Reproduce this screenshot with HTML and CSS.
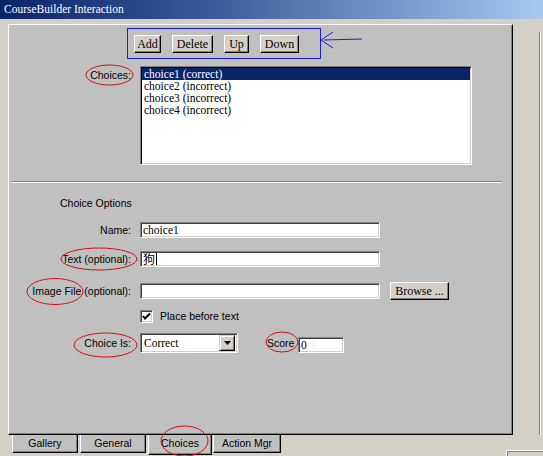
FILE: index.html
```html
<!DOCTYPE html>
<html>
<head>
<meta charset="utf-8">
<title>CourseBuilder Interaction</title>
<link rel="stylesheet" href="styles.css">
</head>
<body>
<div class="titlebar">CourseBuilder Interaction</div>
<div class="workspace">
  <div class="panel">
    <div class="btnbox">
      <div class="btn w-add">Add</div>
      <div class="btn w-delete">Delete</div>
      <div class="btn w-up">Up</div>
      <div class="btn w-down">Down</div>
    </div>
    <div class="row row-choices">
      <span class="label label-top">Choices:</span>
      <div class="listbox">
        <div class="item sel">choice1 (correct)</div>
        <div class="item">choice2 (incorrect)</div>
        <div class="item">choice3 (incorrect)</div>
        <div class="item">choice4 (incorrect)</div>
      </div>
    </div>
    <div class="sep"></div>
    <div class="heading">Choice Options</div>
    <div class="row row-name">
      <span class="label">Name:</span>
      <div class="field w-wide">choice1</div>
    </div>
    <div class="row row-text">
      <span class="label">Text (optional):</span>
      <div class="field w-wide"><span class="cjk">狗</span><span class="caret"></span></div>
    </div>
    <div class="row row-image">
      <span class="label">Image File (optional):</span>
      <div class="ctrls">
        <div class="field w-wide"></div>
        <div class="btn browse">Browse ...</div>
      </div>
    </div>
    <div class="row row-check">
      <span class="label"></span>
      <div class="ctrls">
        <div class="checkbox"><svg width="9" height="9" viewBox="0 0 9 9"><polyline points="1,4 3,6.5 8,1.5" fill="none" stroke="#000" stroke-width="2"/></svg></div>
        <span class="checklabel">Place before text</span>
      </div>
    </div>
    <div class="row row-choice">
      <span class="label">Choice Is:</span>
      <div class="ctrls">
        <div class="select">
          <span class="select-text">Correct</span>
          <span class="select-btn"><svg width="7" height="4" viewBox="0 0 7 4"><polygon points="0,0 7,0 3.5,4" fill="#000"/></svg></span>
        </div>
        <span class="score-label">Score</span>
        <div class="field w-score">0</div>
      </div>
    </div>
  </div>
  <div class="edge"></div>
</div>
<div class="tabs">
  <div class="tab w-gallery">Gallery</div>
  <div class="tab w-general">General</div>
  <div class="tab tab-sel w-choices">Choices</div>
  <div class="tab w-action">Action Mgr</div>
  <div class="corner"></div>
</div>
<svg class="annot" width="543" height="456" viewBox="0 0 543 456">
  <g fill="none" stroke="#d41010" stroke-width="1">
    <ellipse cx="109.5" cy="75" rx="23.5" ry="10"/>
    <ellipse cx="99" cy="259" rx="38" ry="11"/>
    <ellipse cx="55" cy="291.5" rx="28" ry="13"/>
    <ellipse cx="105.5" cy="345" rx="31.5" ry="12"/>
    <ellipse cx="282" cy="342" rx="16" ry="10"/>
    <ellipse cx="184.5" cy="441" rx="23.5" ry="15"/>
  </g>
  <g fill="none" stroke="#1a1ad0" stroke-width="1">
    <line x1="321" y1="40" x2="333" y2="32"/>
    <line x1="321" y1="40" x2="333" y2="48"/>
    <line x1="324" y1="40" x2="362" y2="39"/>
  </g>
</svg>
</body>
</html>
```
FILE: styles.css
```css
html, body {
  margin: 0;
  padding: 0;
}
body {
  width: 543px;
  height: 456px;
  overflow: hidden;
  background: #d4d0c8;
  font-family: "Liberation Sans", Arial, sans-serif;
  font-size: 10.5px;
  color: #000;
  position: relative;
}
.titlebar {
  height: 19px;
  line-height: 19px;
  padding-left: 4px;
  background: linear-gradient(to right, #0a246a 0%, #3a5c9c 40%, #a6caf0 100%);
  color: #fff;
  font-family: "Liberation Serif", "Times New Roman", serif;
  font-size: 11.5px;
}
.workspace {
  display: flex;
  padding-top: 5px;
  padding-left: 8px;
}
.panel {
  width: 505px;
  height: 411px;
  box-sizing: border-box;
  background: #c0c0c0;
  border-top: 1px solid #fff;
  border-left: 1px solid #fff;
  border-right: 1px solid #000;
  border-bottom: 1px solid #000;
  box-shadow: inset -1px -1px 0 #808080;
  display: flex;
  flex-direction: column;
}
.edge {
  width: 0;
  margin-left: 26px;
  margin-top: 8px;
  border-left: 1px solid #808080;
  border-right: 1px solid #fff;
}
.btnbox {
  margin-top: 3px;
  margin-left: 118px;
  width: 194px;
  height: 31px;
  box-sizing: border-box;
  border: 1px solid #1a1ad0;
  display: flex;
  align-items: center;
  padding-left: 6px;
  gap: 11px;
}
.btn {
  height: 18px;
  box-sizing: border-box;
  background: #d4d0c8;
  border-top: 1px solid #fff;
  border-left: 1px solid #fff;
  border-right: 1px solid #000;
  border-bottom: 1px solid #000;
  box-shadow: inset -1px -1px 0 #808080;
  font-family: "Liberation Serif", "Times New Roman", serif;
  font-size: 12px;
  line-height: 16px;
  text-align: center;
}
.w-add { width: 27px; }
.w-delete { width: 41px; }
.w-up { width: 25px; }
.w-down { width: 39px; }
.row {
  display: grid;
  grid-template-columns: 122px auto;
  column-gap: 9px;
  align-items: center;
}
.label {
  text-align: right;
  line-height: 12px;
  white-space: nowrap;
}
.label-top {
  align-self: start;
  padding-top: 3px;
}
.row-choices {
  margin-top: 7px;
  height: 99px;
  align-items: start;
}
.listbox {
  width: 332px;
  height: 99px;
  box-sizing: border-box;
  background: #fff;
  border-top: 1px solid #808080;
  border-left: 1px solid #808080;
  border-right: 1px solid #fff;
  border-bottom: 1px solid #fff;
  box-shadow: inset 1px 1px 0 #000, inset -1px -1px 0 #d4d0c8;
  padding: 1px;
  font-family: "Liberation Serif", "Times New Roman", serif;
  font-size: 11.5px;
}
.item {
  height: 12px;
  line-height: 12px;
  padding-left: 2px;
  white-space: nowrap;
}
.item.sel {
  background: #0a246a;
  color: #fff;
}
.sep {
  margin-top: 16px;
  margin-left: 3px;
  margin-right: 10px;
  border-top: 1px solid #808080;
  border-bottom: 1px solid #fff;
}
.heading {
  margin-top: 14px;
  padding-left: 51px;
  height: 12px;
  line-height: 12px;
}
.field {
  height: 16px;
  box-sizing: border-box;
  background: #fff;
  border-top: 1px solid #808080;
  border-left: 1px solid #808080;
  border-right: 1px solid #fff;
  border-bottom: 1px solid #fff;
  box-shadow: inset 1px 1px 0 #404040, inset -1px -1px 0 #d4d0c8;
  padding-left: 2px;
  font-family: "Liberation Serif", "Times New Roman", serif;
  font-size: 11.5px;
  line-height: 14px;
  display: flex;
  align-items: center;
  white-space: nowrap;
}
.w-wide { width: 240px; }
.w-score { width: 46px; align-self: flex-end; }
.cjk {
  font-family: "Noto Sans CJK TC", "Noto Sans CJK SC", sans-serif;
  font-size: 12px;
  line-height: 14px;
}
.caret {
  width: 1px;
  height: 12px;
  background: #000;
  margin-left: 1px;
}
.row-name { margin-top: 13px; height: 16px; }
.row-text { margin-top: 13px; height: 16px; }
.row-image { margin-top: 15px; height: 18px; }
.row-check { margin-top: 9px; height: 14px; }
.row-choice { margin-top: 10px; height: 20px; }
.ctrls {
  display: flex;
  align-items: center;
  height: 100%;
}
.browse {
  width: 59px;
  margin-left: 10px;
}
.checkbox {
  width: 13px;
  height: 13px;
  box-sizing: border-box;
  background: #fff;
  border-top: 1px solid #808080;
  border-left: 1px solid #808080;
  border-right: 1px solid #fff;
  border-bottom: 1px solid #fff;
  box-shadow: inset 1px 1px 0 #404040, inset -1px -1px 0 #d4d0c8;
  display: flex;
  align-items: center;
  justify-content: center;
}
.checklabel {
  margin-left: 7px;
}
.select {
  width: 98px;
  height: 20px;
  box-sizing: border-box;
  background: #fff;
  border-top: 1px solid #808080;
  border-left: 1px solid #808080;
  border-right: 1px solid #fff;
  border-bottom: 1px solid #fff;
  box-shadow: inset 1px 1px 0 #404040, inset -1px -1px 0 #d4d0c8;
  display: flex;
  align-items: center;
  padding: 2px 2px 2px 3px;
  font-family: "Liberation Serif", "Times New Roman", serif;
  font-size: 11.5px;
}
.select-text { flex: 1; }
.select-btn {
  width: 16px;
  height: 16px;
  box-sizing: border-box;
  background: #d4d0c8;
  border-top: 1px solid #d4d0c8;
  border-left: 1px solid #d4d0c8;
  border-right: 1px solid #000;
  border-bottom: 1px solid #000;
  box-shadow: inset 1px 1px 0 #fff, inset -1px -1px 0 #808080;
  display: flex;
  align-items: center;
  justify-content: center;
}
.score-label {
  margin-left: 29px;
  width: 31px;
}
.tabs {
  display: flex;
  padding-left: 12px;
  height: 21px;
}
.tab {
  height: 18px;
  box-sizing: border-box;
  background: #c0c0c0;
  border-left: 1px solid #fff;
  border-right: 1px solid #000;
  border-bottom: 1px solid #000;
  box-shadow: inset -1px -1px 0 #808080;
  text-align: center;
  line-height: 16px;
  margin-right: 2px;
}
.tab-sel {
  height: 20px;
  margin-right: 1px;
}
.w-gallery { width: 66px; }
.w-general { width: 66px; }
.w-choices { width: 64px; }
.w-action { width: 68px; }
.corner {
  margin-left: auto;
  align-self: flex-end;
  width: 36px;
  height: 5px;
  border-top: 1px solid #fff;
  border-left: 1px solid #fff;
  box-shadow: inset 1px 1px 0 #808080;
}
.annot {
  position: absolute;
  left: 0;
  top: 0;
  pointer-events: none;
}
```
